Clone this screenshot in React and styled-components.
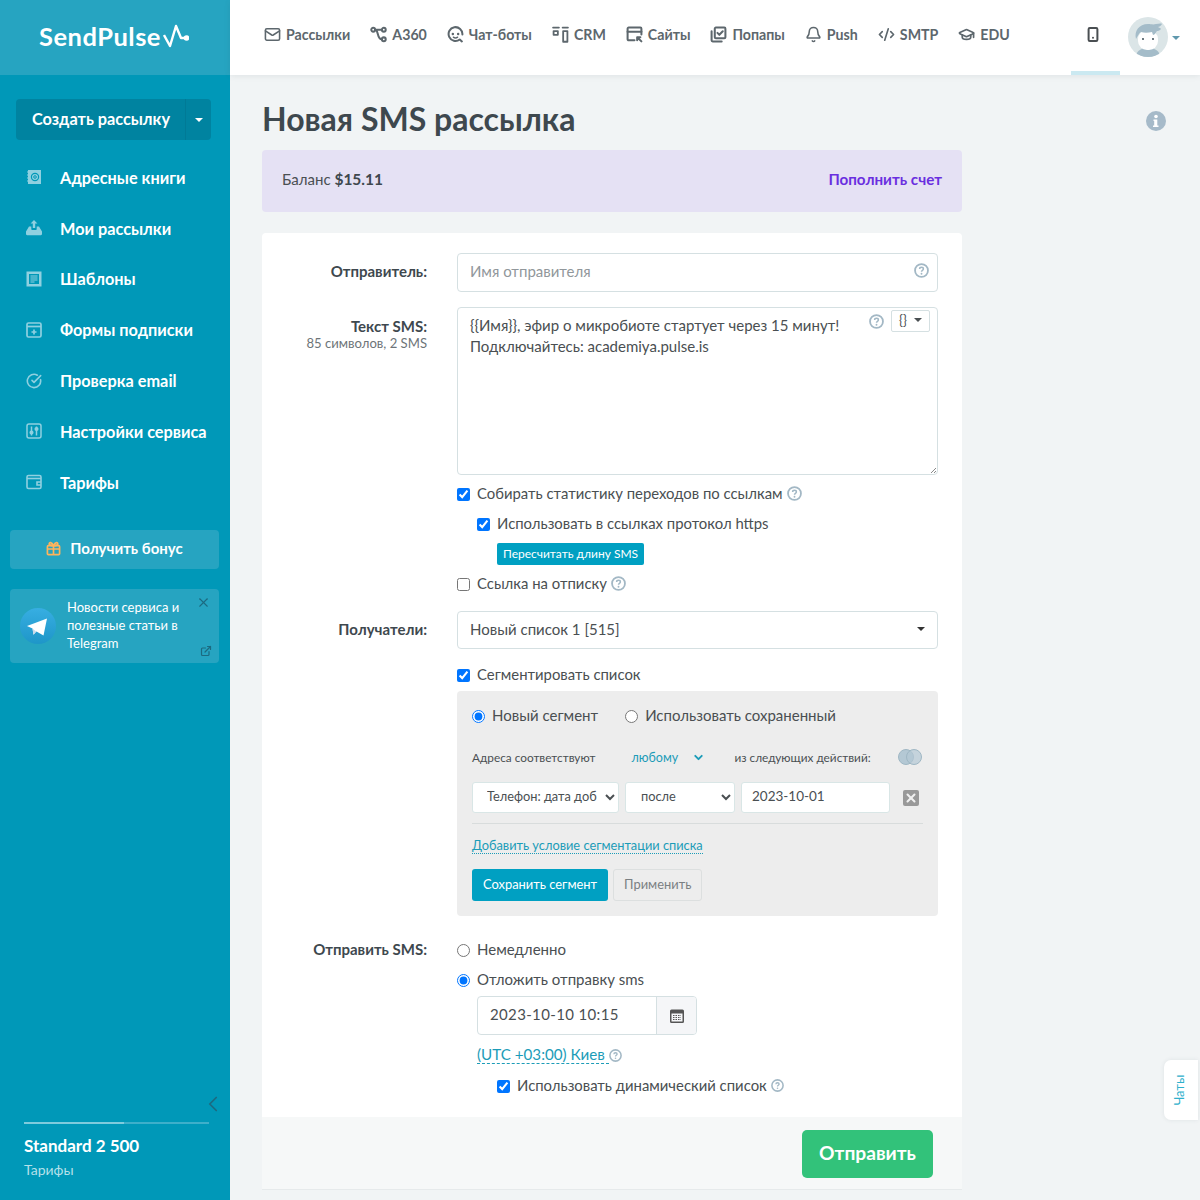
import React from "react";
import styled, { createGlobalStyle } from "styled-components";
import { ChevronDown, ChevronLeft, X, ExternalLink, Mail, Bell, CodeXml, GraduationCap, CircleCheckBig } from "lucide-react";

const FONT = `"Lato", "Noto Sans", sans-serif`;

const GlobalStyle = createGlobalStyle`
  * { box-sizing: border-box; }
  html, body { margin: 0; padding: 0; height: 1200px; overflow: hidden; }
  body { font-family: ${FONT}; background: #f1f4f5; color: #4a4f52; }
`;

const Page = styled.div`
  display: flex;
  width: 1200px;
  height: 1200px;
  position: relative;
  overflow: hidden;
`;

const Sidebar = styled.aside`
  width: 230px;
  flex: none;
  background: #0098b8;
  display: flex;
  flex-direction: column;
`;

const LogoBar = styled.div`
  height: 75px;
  background: #26a4c1;
  display: flex;
  align-items: center;
  justify-content: center;
  gap: 2px;
  padding: 0 2px 3px 0;
  color: #fff;
  font-size: 25.5px;
  font-weight: 700;
  letter-spacing: 0.5px;
`;

const CreateGroup = styled.div`
  display: flex;
  height: 41px;
  margin: 24px 19px 0 16px;
  border-radius: 4px;
  overflow: hidden;
  background: #0083a0;
  color: #fff;
`;

const CreateMain = styled.div`
  flex: 1;
  display: flex;
  align-items: center;
  padding: 0 0 3px 16px;
  font-size: 16.3px;
  font-weight: 700;
`;

const CreateCaret = styled.div`
  width: 26px;
  display: flex;
  align-items: center;
  justify-content: center;
  border-left: 1px solid #007a96;
`;

const Caret = styled.span`
  display: inline-block;
  width: 0;
  height: 0;
  border-left: 4px solid transparent;
  border-right: 4px solid transparent;
  border-top: 4px solid ${(p) => p.$color || "#fff"};
`;

const Menu = styled.nav`
  display: flex;
  flex-direction: column;
  margin-top: 12px;
`;

const MenuItem = styled.div`
  height: 50.8px;
  display: flex;
  align-items: center;
  gap: 18px;
  padding-left: 26px;
  color: #fff;
  font-size: 16.3px;
  font-weight: 700;
  svg { flex: none; color: #8fd0e0; }
`;

const BonusButton = styled.div`
  height: 39px;
  margin: 22px 11px 0 10px;
  border-radius: 4px;
  background: #26a4c1;
  display: flex;
  align-items: center;
  justify-content: center;
  gap: 9px;
  padding-bottom: 2px;
  color: #fff;
  font-size: 15px;
  font-weight: 700;
`;

const TelegramCard = styled.div`
  position: relative;
  height: 74px;
  margin: 20px 11px 0 10px;
  border-radius: 4px;
  background: #26a4c1;
  display: flex;
  align-items: center;
  gap: 11px;
  padding-left: 10px;
  color: #fff;
  font-size: 13px;
  line-height: 18px;
`;

const TelegramText = styled.div`
  width: 125px;
  margin-top: -2px;
`;

const CardClose = styled.span`
  position: absolute;
  top: 6px;
  right: 8px;
  color: #1c6a80;
  display: flex;
`;

const CardLink = styled.span`
  position: absolute;
  bottom: 6px;
  right: 7px;
  color: #1c6a80;
  display: flex;
`;

const PlanBlock = styled.div`
  margin-top: auto;
  padding: 0 21px 20px 24px;
  color: #fff;
`;

const Collapse = styled.div`
  display: flex;
  align-items: center;
  justify-content: flex-end;
  margin-right: -17px;
  color: #1c6a80;
  height: 24px;
  margin-bottom: 6px;
`;

const PlanBar = styled.div`
  height: 2px;
  background: #3eafca;
  &::before {
    content: "";
    display: block;
    height: 2px;
    width: 54%;
    background: #7fcbdd;
  }
`;

const PlanName = styled.div`
  margin-top: 11px;
  font-size: 17px;
  font-weight: 700;
  line-height: 22px;
`;

const PlanLink = styled.div`
  margin-top: 3px;
  font-size: 14px;
  line-height: 20px;
  color: #b5e0ea;
`;

const Main = styled.div`
  flex: 1;
  min-width: 0;
  display: flex;
  flex-direction: column;
`;

const Header = styled.header`
  height: 75px;
  background: #fff;
  box-shadow: 0 1px 6px rgba(60, 80, 90, 0.1);
  display: flex;
  align-items: center;
  padding-left: 34px;
`;

const TopNav = styled.div`
  display: flex;
  align-items: center;
  gap: 20px;
  margin-bottom: 6px;
`;

const TopItem = styled.div`
  display: flex;
  align-items: center;
  gap: 5px;
  color: #5d676d;
  font-size: 14.2px;
  font-weight: 700;
  svg { flex: none; width: 17px; }
`;

const HeaderRight = styled.div`
  margin-left: auto;
  display: flex;
  align-items: center;
  height: 100%;
  padding-right: 20px;
`;

const PhoneTab = styled.div`
  position: relative;
  width: 49px;
  height: 100%;
  display: flex;
  align-items: center;
  justify-content: center;
  padding: 0 5px 7px 0;
  color: #4a4f52;
  margin-right: 8px;
  &::after {
    content: "";
    position: absolute;
    left: 0;
    right: 0;
    bottom: 0;
    height: 4px;
    background: #cbe9f1;
  }
`;

const Avatar = styled.div`
  width: 40px;
  height: 40px;
  border-radius: 50%;
  overflow: hidden;
  margin: 0 4px 1px 0;
`;

const Content = styled.main`
  flex: 1;
  width: 700px;
  margin-left: 32px;
  position: relative;
`;

const Title = styled.h1`
  margin: 0;
  padding-top: 23px;
  height: 75px;
  font-size: 32px;
  line-height: 41px;
  font-weight: 700;
  color: #3e484e;
`;

const PageInfo = styled.span`
  position: absolute;
  top: 36px;
  left: 884px;
  display: flex;
`;

const Balance = styled.div`
  height: 62px;
  border-radius: 4px;
  background: #e5e1f4;
  display: flex;
  align-items: center;
  justify-content: space-between;
  padding: 0 20px 4px;
  font-size: 15px;
  color: #4a4f52;
  b { color: #3e484e; font-size: 15.5px; }
`;

const TopUp = styled.a`
  color: #6a2fe0;
  font-weight: 700;
  font-size: 15.2px;
`;

const Card = styled.section`
  margin-top: 21px;
  background: #fff;
  border-radius: 4px 4px 0 0;
  height: 957px;
  display: flex;
  flex-direction: column;
`;

const Form = styled.div`
  flex: 1;
  padding: 20px 24px 0 0;
`;

const Row = styled.div`
  display: grid;
  grid-template-columns: 165px 481px;
  column-gap: 30px;
  margin-bottom: ${(p) => p.$mb || 0}px;
`;

const Label = styled.div`
  text-align: right;
  font-size: 15px;
  font-weight: 700;
  color: #3e484e;
  padding-top: ${(p) => p.$pt || 10}px;
  line-height: 18px;
`;

const LabelHint = styled.div`
  font-size: 13.1px;
  font-weight: 400;
  color: #6d7478;
  line-height: 17px;
`;

const FakeInput = styled.div`
  position: relative;
  height: ${(p) => p.$h || 39}px;
  border: 1px solid #d5e0e2;
  border-radius: 4px;
  padding: 0 12px 3px;
  display: flex;
  align-items: center;
  font-size: 15px;
  color: ${(p) => (p.$muted ? "#91979b" : "#4a4f52")};
  background: #fff;
`;

const TextArea = styled.textarea`
  display: block;
  width: 100%;
  height: 168px;
  border: 1px solid #d5e0e2;
  border-radius: 4px;
  padding: 7px 12px;
  font-family: ${FONT};
  font-size: 15px;
  line-height: 21px;
  color: #4a4f52;
  outline: none;
  resize: none;
`;

const TextAreaWrap = styled.div`
  position: relative;
  &::after {
    content: "";
    position: absolute;
    right: 2px;
    bottom: 2px;
    width: 5px;
    height: 5px;
    background: linear-gradient(135deg, transparent 45%, #8a8a8a 45%, #8a8a8a 58%, transparent 58%, transparent 72%, #8a8a8a 72%, #8a8a8a 86%, transparent 86%);
  }
`;

const TextTools = styled.div`
  position: absolute;
  top: 3px;
  right: 8px;
  display: flex;
  align-items: center;
  gap: 7px;
`;

const VarButton = styled.div`
  width: 39px;
  height: 22px;
  border: 1px solid #d5e0e2;
  border-radius: 2px;
  display: flex;
  align-items: center;
  justify-content: center;
  gap: 7px;
  padding-bottom: 2px;
  font-size: 13px;
  color: #4a4f52;
  background: #fff;
`;

const InputHelp = styled.span`
  position: absolute;
  right: 8px;
  top: 9px;
  display: flex;
`;

const HelpAfter = styled.span`
  display: flex;
  margin-left: -3px;
`;

const Check = styled.label`
  display: flex;
  align-items: center;
  height: 20px;
  gap: 7px;
  margin-top: ${(p) => p.$mt || 0}px;
  margin-left: ${(p) => p.$ml || 0}px;
  font-size: 14.88px;
  line-height: 18px;
  color: #4a4f52;
  input {
    width: 13px;
    height: 13px;
    margin: 2px 0 0;
    flex: none;
  }
  padding-bottom: 2px;
`;

const SmallButton = styled.div`
  display: inline-flex;
  align-items: center;
  height: 22px;
  margin: 9px 0 0 40px;
  padding: 0 6px 2px;
  border-radius: 2px;
  background: #00a0c2;
  color: #fff;
  font-size: 12px;
`;

const SelectBox = styled.div`
  height: 38px;
  margin-top: 12px;
  border: 1px solid #d5e0e2;
  border-radius: 4px;
  display: flex;
  align-items: center;
  justify-content: space-between;
  padding: 0 12px 2px;
  font-size: 15px;
  color: #4a4f52;
`;

const Segment = styled.div`
  margin-top: 6px;
  height: 225px;
  background: #ededed;
  border-radius: 4px;
  padding: 15px 15px 0;
`;

const RadioRow = styled.div`
  display: flex;
  align-items: center;
  gap: 27px;
`;

const Radio = styled.label`
  display: flex;
  align-items: center;
  gap: 7px;
  height: 20px;
  padding-bottom: 2px;
  font-size: 15px;
  color: #4a4f52;
  margin-top: ${(p) => p.$mt || 0}px;
  input {
    width: 13px;
    height: 13px;
    margin: 2px 0 0;
    flex: none;
  }
`;

const MatchRow = styled.div`
  display: flex;
  align-items: center;
  height: 20px;
  margin-top: 21px;
  font-size: 11.8px;
  color: #4a4f52;
`;

const MatchAny = styled.span`
  display: flex;
  align-items: center;
  width: 103px;
  margin-left: 36px;
  color: #1c9cb8;
  gap: 14px;
  font-size: 12.5px;
  svg { margin-top: 1px; }
`;

const Venn = styled.span`
  margin-left: auto;
  display: flex;
`;

const CondRow = styled.div`
  display: flex;
  align-items: center;
  gap: 6px;
  margin-top: 15px;
`;

const CondSelect = styled.select`
  width: ${(p) => p.$w}px;
  height: 31px;
  border: 1px solid #d9e6e6;
  border-radius: 3px;
  background-color: #fff;
  padding: 0 0 3px ${(p) => p.$pl}px;
  font-family: ${FONT};
  font-size: 12.8px;
  color: #4a4f52;
  outline: none;
`;

const CondInput = styled.div`
  width: 149px;
  height: 31px;
  border: 1px solid #d9e6e6;
  border-radius: 3px;
  background: #fff;
  padding: 0 0 3px 10px;
  display: flex;
  align-items: center;
  font-size: 13.5px;
  color: #4a4f52;
`;

const RemoveCond = styled.span`
  width: 16px;
  height: 16px;
  margin-left: 7px;
  border-radius: 2px;
  background: #999;
  color: #f0f0f0;
  display: flex;
  align-items: center;
  justify-content: center;
`;

const Divider = styled.div`
  height: 1px;
  background: #d8dcdc;
  margin-top: 10px;
`;

const AddLink = styled.a`
  display: inline-block;
  margin-top: 14px;
  font-size: 12.8px;
  line-height: 15px;
  color: #1c9cb8;
  border-bottom: 1px dotted #1c9cb8;
`;

const SegmentActions = styled.div`
  display: flex;
  gap: 5px;
  margin-top: 15px;
`;

const SaveButton = styled.div`
  height: 32px;
  padding: 0 11px 2px;
  border-radius: 3px;
  background: #00a0c2;
  color: #fff;
  font-size: 12.9px;
  display: flex;
  align-items: center;
`;

const ApplyButton = styled.div`
  height: 32px;
  padding: 0 10px 2px;
  border: 1px solid #dcdfdf;
  border-radius: 3px;
  color: #7b8083;
  font-size: 12.9px;
  display: flex;
  align-items: center;
`;

const DateGroup = styled.div`
  display: flex;
  width: 220px;
  height: 39px;
  margin: 6px 0 0 20px;
  border: 1px solid #d5e0e2;
  border-radius: 4px;
  overflow: hidden;
  font-size: 15px;
  letter-spacing: 0.35px;
  color: #4a4f52;
`;

const DateValue = styled.div`
  flex: 1;
  padding: 0 0 3px 12px;
  display: flex;
  align-items: center;
`;

const DateIcon = styled.div`
  width: 40px;
  background: #f5f6f8;
  border-left: 1px solid #d5e0e2;
  display: flex;
  align-items: center;
  justify-content: center;
`;

const ZoneRow = styled.div`
  display: flex;
  align-items: center;
  margin: 10px 0 0 20px;
  height: 20px;
  font-size: 15.2px;
`;

const ZoneLink = styled.a`
  color: #1c9cb8;
  line-height: 17px;
  padding-right: 4px;
  border-bottom: 1px dashed #1c9cb8;
`;

const Footer = styled.div`
  height: 73px;
  flex: none;
  background: #f6f8f8;
  border-bottom: 1px solid #e6eaeb;
  display: flex;
  align-items: center;
  justify-content: flex-end;
  padding: 2px 29px 0 0;
`;

const SendButton = styled.div`
  width: 131px;
  height: 48px;
  border-radius: 5px;
  background: #32c27a;
  color: #fff;
  font-size: 19.2px;
  font-weight: 700;
  padding-bottom: 4px;
  display: flex;
  align-items: center;
  justify-content: center;
`;

const ChatTab = styled.div`
  position: absolute;
  right: 2px;
  top: 1060px;
  width: 34px;
  height: 60px;
  padding-right: 3px;
  background: #fff;
  border-radius: 7px 0 0 7px;
  box-shadow: 0 0 4px rgba(60, 80, 90, 0.1);
  display: flex;
  align-items: center;
  justify-content: center;
  color: #2fb0cc;
  font-size: 13px;
  span { transform: rotate(-90deg); }
`;

const Help = ({ size = 15, color = "#a3b8c5" }) => (
  <svg width={size} height={size} viewBox="0 0 16 16" fill="none">
    <circle cx="8" cy="8" r="6.900" stroke={color} strokeWidth="1.900" />
    <path d="M6 6.400c0-1.100.9-1.800 2-1.800s2 .7 2 1.700c0 1.500-2 1.400-2 2.900" stroke={color} strokeWidth="1.600" fill="none" />
    <circle cx="8" cy="11.400" r="1" fill={color} />
  </svg>
);

const Svg = ({ size = 17, children, sw = 1.900 }) => (
  <svg width={size} height={size} viewBox="0 0 16 16" fill="none" stroke="currentColor" strokeWidth={sw} strokeLinecap="round" strokeLinejoin="round">
    {children}
  </svg>
);

const sideIcons = {
  book: (
    <svg width="16" height="16" viewBox="0 0 16 16" fill="none">
      <rect x="2" y="1" width="13" height="14" fill="#8fd0e0" />
      <path d="M1 3h2M1 6h2M1 9h2M1 12h2" stroke="#8fd0e0" strokeWidth="1.200" />
      <circle cx="9" cy="8" r="3.600" stroke="#0098b8" strokeWidth="1.200" />
      <circle cx="9" cy="8" r="1.300" stroke="#0098b8" strokeWidth="1" />
    </svg>
  ),
  send: (
    <svg width="16" height="16" viewBox="0 0 16 16" fill="#8fd0e0">
      <path d="M8 0l3.400 3.600H9.200V8H6.800V3.600H4.600z" />
      <path d="M3 6.500h2.300v2.700c0 .5.3.8.8.8h3.800c.5 0 .8-.3.8-.8V6.500H13l3 5v2.600c0 .7-.5 1.200-1.200 1.200H1.200C.5 15.300 0 14.800 0 14.100v-2.600z" />
    </svg>
  ),
  tpl: (
    <svg width="16" height="16" viewBox="0 0 16 16" fill="none">
      <rect x=".5" y=".5" width="15" height="15" fill="#8fd0e0" />
      <rect x="3" y="3" width="10" height="10" fill="#0098b8" />
      <path d="M4.500 5h7M4.500 7h7M4.500 9h7M4.500 11h4" stroke="#8fd0e0" strokeWidth="1.100" />
    </svg>
  ),
  form: (
    <svg width="16" height="16" viewBox="0 0 16 16" fill="none" stroke="#8fd0e0" strokeWidth="1.700">
      <rect x="1" y="1" width="14" height="14" rx="1.500" />
      <path d="M1 4.500h14" />
      <path d="M8 7.500v5M5.500 10h5" />
    </svg>
  ),
  check: <CircleCheckBig size={16} strokeWidth={2.400} />,
  settings: (
    <svg width="16" height="16" viewBox="0 0 16 16" fill="none" stroke="#8fd0e0" strokeWidth="1.500">
      <rect x="1" y="1" width="14" height="14" rx="2" />
      <path d="M5.500 3.500v9M10.500 3.500v9" />
      <circle cx="5.500" cy="9.500" r="1.300" fill="#8fd0e0" />
      <circle cx="10.500" cy="6" r="1.300" fill="#8fd0e0" />
    </svg>
  ),
  wallet: (
    <svg width="16" height="16" viewBox="0 0 16 16" fill="none" stroke="#8fd0e0" strokeWidth="1.600">
      <rect x="1" y="1.500" width="14" height="13" rx="1.500" />
      <path d="M1 4.500h14" />
      <path d="M15 8h-4v3h4" />
    </svg>
  ),
};

const sideItems = [
  ["book", "Адресные книги"],
  ["send", "Мои рассылки"],
  ["tpl", "Шаблоны"],
  ["form", "Формы подписки"],
  ["check", "Проверка email"],
  ["settings", "Настройки сервиса"],
  ["wallet", "Тарифы"],
];

const topItems = [
  [<Mail size={17} strokeWidth={2.200} key="m" />, "Рассылки"],
  [
    <Svg key="a">
      <circle cx="3" cy="3.500" r="1.800" />
      <circle cx="13" cy="3.500" r="1.800" />
      <circle cx="13" cy="12.500" r="1.800" />
      <path d="M5 3.500h6M5 3.500c3 0 1.500 9 6 9" />
    </Svg>,
    "A360",
  ],
  [
    <Svg key="c">
      <path d="M14 14.500l-2-1.800A6.500 6.500 0 1 1 14.500 8" />
      <path d="M5.500 7.500h.01M10.500 7.500h.01" strokeWidth="2.300" />
      <path d="M6 10.500c1 .8 3 .8 4 0" strokeWidth="1.300" />
    </Svg>,
    "Чат-боты",
  ],
  [
    <Svg key="r" sw={1.700}>
      <path d="M1 1.500h5.500M10 1.500h5" />
      <rect x="1.500" y="4.800" width="4" height="3.500" />
      <rect x="10.500" y="4.800" width="4" height="10" />
    </Svg>,
    "CRM",
  ],
  [
    <Svg key="s">
      <path d="M8 13.500H2.500a1 1 0 0 1-1-1v-10a1 1 0 0 1 1-1h11a1 1 0 0 1 1 1V8" />
      <path d="M1.500 5.500h13" />
      <path d="M14.500 14.500l-3-3M10.500 13.500v-3h3" />
    </Svg>,
    "Сайты",
  ],
  [
    <Svg key="p">
      <rect x="4.500" y="1.500" width="10" height="10" rx="1" />
      <path d="M1.500 5v8.500a1 1 0 0 0 1 1H11" />
      <path d="M7 6.500l1.800 1.800 3.200-3.300" />
    </Svg>,
    "Попапы",
  ],
  [<Bell size={17} strokeWidth={2.200} key="b" />, "Push"],
  [<CodeXml size={17} strokeWidth={2.300} key="x" />, "SMTP"],
  [<GraduationCap size={17} strokeWidth={2.400} key="g" />, "EDU"],
];

export default function App() {
  return (
    <>
      <GlobalStyle />
      <Page>
        <Sidebar>
          <LogoBar>
            SendPulse
            <svg width="26" height="24" viewBox="0 0 26 24" fill="none" stroke="#fff" strokeWidth="2.400" strokeLinejoin="round">
              <path d="M1 11l6 11 6-20 5 12h5" />
              <circle cx="23.500" cy="14" r="1.600" fill="#fff" />
            </svg>
          </LogoBar>
          <CreateGroup>
            <CreateMain>Создать рассылку</CreateMain>
            <CreateCaret>
              <Caret />
            </CreateCaret>
          </CreateGroup>
          <Menu>
            {sideItems.map(([icon, label]) => (
              <MenuItem key={label}>
                {sideIcons[icon]}
                {label}
              </MenuItem>
            ))}
          </Menu>
          <BonusButton>
            <svg width="15" height="15" viewBox="0 0 16 16" fill="none" stroke="#ffb45c" strokeWidth="1.800">
              <rect x="1.500" y="5" width="13" height="9.500" rx="1" />
              <path d="M1.500 8.500h13M8 5v9.500" />
              <path d="M8 5C6 1 3 1 3.500 3.500 3.800 5 6 5 8 5c2 0 4.200 0 4.500-1.500C13 1 10 1 8 5z" />
            </svg>
            Получить бонус
          </BonusButton>
          <TelegramCard>
            <svg width="36" height="36" viewBox="0 0 36 36">
              <defs>
                <linearGradient id="tg" x1="0" y1="0" x2="0" y2="1">
                  <stop offset="0" stopColor="#37aee2" />
                  <stop offset="1" stopColor="#1e96c8" />
                </linearGradient>
              </defs>
              <circle cx="18" cy="18" r="18" fill="url(#tg)" />
              <path d="M7 18l20-7.500-3.500 17-7-4-3 3-1-6z" fill="#fff" />
              <path d="M12.500 20.500l1 6.500 2.500-3.500z" fill="#c8daea" />
            </svg>
            <TelegramText>Новости сервиса и полезные статьи в Telegram</TelegramText>
            <CardClose>
              <X size={15} strokeWidth={1.700} />
            </CardClose>
            <CardLink>
              <ExternalLink size={12} strokeWidth={2.400} />
            </CardLink>
          </TelegramCard>
          <PlanBlock>
            <Collapse>
              <ChevronLeft size={26} strokeWidth={1.600} />
            </Collapse>
            <PlanBar />
            <PlanName>Standard 2 500</PlanName>
            <PlanLink>Тарифы</PlanLink>
          </PlanBlock>
        </Sidebar>
        <Main>
          <Header>
            <TopNav>
              {topItems.map(([icon, label]) => (
                <TopItem key={label}>
                  {icon}
                  {label}
                </TopItem>
              ))}
            </TopNav>
            <HeaderRight>
              <PhoneTab>
                <svg width="12" height="15" viewBox="0 0 12 15" fill="none">
                  <rect x="1.600" y="1" width="8.800" height="13" rx="1.200" stroke="#4a4f52" strokeWidth="2" />
                  <circle cx="6" cy="10.800" r="1" fill="#4a4f52" />
                </svg>
              </PhoneTab>
              <Avatar>
                <svg width="40" height="40" viewBox="0 0 40 40">
                  <rect width="40" height="40" fill="#dbe5e7" />
                  <path d="M8 40c0-6 5-9 12-9s12 3 12 9z" fill="#a4bcc9" />
                  <rect x="10" y="13" width="20" height="20" rx="9" fill="#fff" />
                  <path d="M8 22c-2-8 3-15 12-15 3 0 5 1 8 0 2 0 5-1 6 0-1 2-3 3-4 3 1 1 3 1 3 2-2 2-3 2-4 2-1 1-2 4-4 4l-1-3c-4 1-8 1-11 0-2 1-3 4-5 7z" fill="#a4bcc9" />
                  <circle cx="15" cy="22" r="1.100" fill="#4a5a63" />
                  <circle cx="25" cy="22" r="1.100" fill="#4a5a63" />
                </svg>
              </Avatar>
              <Caret $color="#5f98ad" />
            </HeaderRight>
          </Header>
          <Content>
            <Title>Новая SMS рассылка</Title>
            <PageInfo>
              <svg width="20" height="20" viewBox="0 0 20 20">
                <circle cx="10" cy="10" r="10" fill="#a6bac9" />
                <circle cx="10" cy="5.500" r="1.800" fill="#fff" />
                <path d="M7.500 8.500h3.800v6h1.200v1.500h-5.500v-1.500h1.200v-4.500h-.7z" fill="#fff" />
              </svg>
            </PageInfo>
            <Balance>
              <span>
                Баланс <b>$15.11</b>
              </span>
              <TopUp>Пополнить счет</TopUp>
            </Balance>
            <Card>
              <Form>
                <Row $mb={15}>
                  <Label $pt={9}>Отправитель:</Label>
                  <FakeInput $muted>
                    Имя отправителя
                    <InputHelp>
                      <Help />
                    </InputHelp>
                  </FakeInput>
                </Row>
                <Row $mb={5}>
                  <Label>
                    Текст SMS:
                    <LabelHint>85 символов, 2 SMS</LabelHint>
                  </Label>
                  <div>
                    <TextAreaWrap>
                      <TextArea
                        readOnly
                        value={"{{Имя}}, эфир о микробиоте стартует через 15 минут!\nПодключайтесь: academiya.pulse.is"}
                      />
                      <TextTools>
                        <Help />
                        <VarButton>
                          {"{}"}
                          <Caret $color="#4a4f52" />
                        </VarButton>
                      </TextTools>
                    </TextAreaWrap>
                    <Check $mt={9}>
                      <input type="checkbox" defaultChecked />
                      Собирать статистику переходов по ссылкам
                      <HelpAfter>
                        <Help />
                      </HelpAfter>
                    </Check>
                    <Check $mt={10} $ml={20}>
                      <input type="checkbox" defaultChecked />
                      Использовать в ссылках протокол https
                    </Check>
                    <SmallButton>Пересчитать длину SMS</SmallButton>
                    <Check $mt={9}>
                      <input type="checkbox" />
                      Ссылка на отписку
                      <HelpAfter>
                        <Help />
                      </HelpAfter>
                    </Check>
                  </div>
                </Row>
                <Row $mb={14}>
                  <Label $pt={21}>Получатели:</Label>
                  <div>
                    <SelectBox>
                      Новый список 1 [515]
                      <Caret $color="#333" />
                    </SelectBox>
                    <Check $mt={16}>
                      <input type="checkbox" defaultChecked />
                      Сегментировать список
                    </Check>
                    <Segment>
                      <RadioRow>
                        <Radio>
                          <input type="radio" name="seg" defaultChecked />
                          Новый сегмент
                        </Radio>
                        <Radio>
                          <input type="radio" name="seg" />
                          Использовать сохраненный
                        </Radio>
                      </RadioRow>
                      <MatchRow>
                        Адреса соответствуют
                        <MatchAny>
                          любому
                          <ChevronDown size={13} strokeWidth={3.500} />
                        </MatchAny>
                        из следующих действий:
                        <Venn>
                          <svg width="26" height="18" viewBox="0 0 26 18" fill="#b4c8d4" stroke="#9fb7c4">
                            <circle cx="9" cy="9" r="7.500" />
                            <circle cx="17" cy="9" r="7.500" fillOpacity="0.700" />
                          </svg>
                        </Venn>
                      </MatchRow>
                      <CondRow>
                        <CondSelect $w={147} $pl={10} defaultValue="date">
                          <option value="date">Телефон: дата доб</option>
                        </CondSelect>
                        <CondSelect $w={110} $pl={11} defaultValue="after">
                          <option value="after">после</option>
                        </CondSelect>
                        <CondInput>2023-10-01</CondInput>
                        <RemoveCond>
                          <X size={14} strokeWidth={3.500} />
                        </RemoveCond>
                      </CondRow>
                      <Divider />
                      <AddLink>Добавить условие сегментации списка</AddLink>
                      <SegmentActions>
                        <SaveButton>Сохранить сегмент</SaveButton>
                        <ApplyButton>Применить</ApplyButton>
                      </SegmentActions>
                    </Segment>
                  </div>
                </Row>
                <Row>
                  <Label $pt={10}>Отправить SMS:</Label>
                  <div>
                    <Radio $mt={10}>
                      <input type="radio" name="when" />
                      Немедленно
                    </Radio>
                    <Radio $mt={10}>
                      <input type="radio" name="when" defaultChecked />
                      Отложить отправку sms
                    </Radio>
                    <DateGroup>
                      <DateValue>2023-10-10 10:15</DateValue>
                      <DateIcon>
                        <svg width="16" height="16" viewBox="0 0 16 16">
                          <path d="M1 3a1.500 1.500 0 0 1 1.500-1.500h11A1.500 1.500 0 0 1 15 3v10.500a1.500 1.500 0 0 1-1.500 1.500h-11A1.500 1.500 0 0 1 1 13.500z" fill="#555" />
                          <rect x="2.500" y="5.500" width="11" height="8" fill="#f5f6f8" />
                          <path d="M4 7.500h8M4 9.500h8M4 11.500h8" stroke="#555" strokeWidth="1.200" strokeDasharray="1.500 1" />
                        </svg>
                      </DateIcon>
                    </DateGroup>
                    <ZoneRow>
                      <ZoneLink>(UTC +03:00) Киев</ZoneLink>
                      <Help size={13} />
                    </ZoneRow>
                    <Check $mt={11} $ml={40}>
                      <input type="checkbox" defaultChecked />
                      Использовать динамический список
                      <HelpAfter>
                        <Help size={13} />
                      </HelpAfter>
                    </Check>
                  </div>
                </Row>
              </Form>
              <Footer>
                <SendButton>Отправить</SendButton>
              </Footer>
            </Card>
          </Content>
        </Main>
        <ChatTab>
          <span>Чаты</span>
        </ChatTab>
      </Page>
    </>
  );
}
